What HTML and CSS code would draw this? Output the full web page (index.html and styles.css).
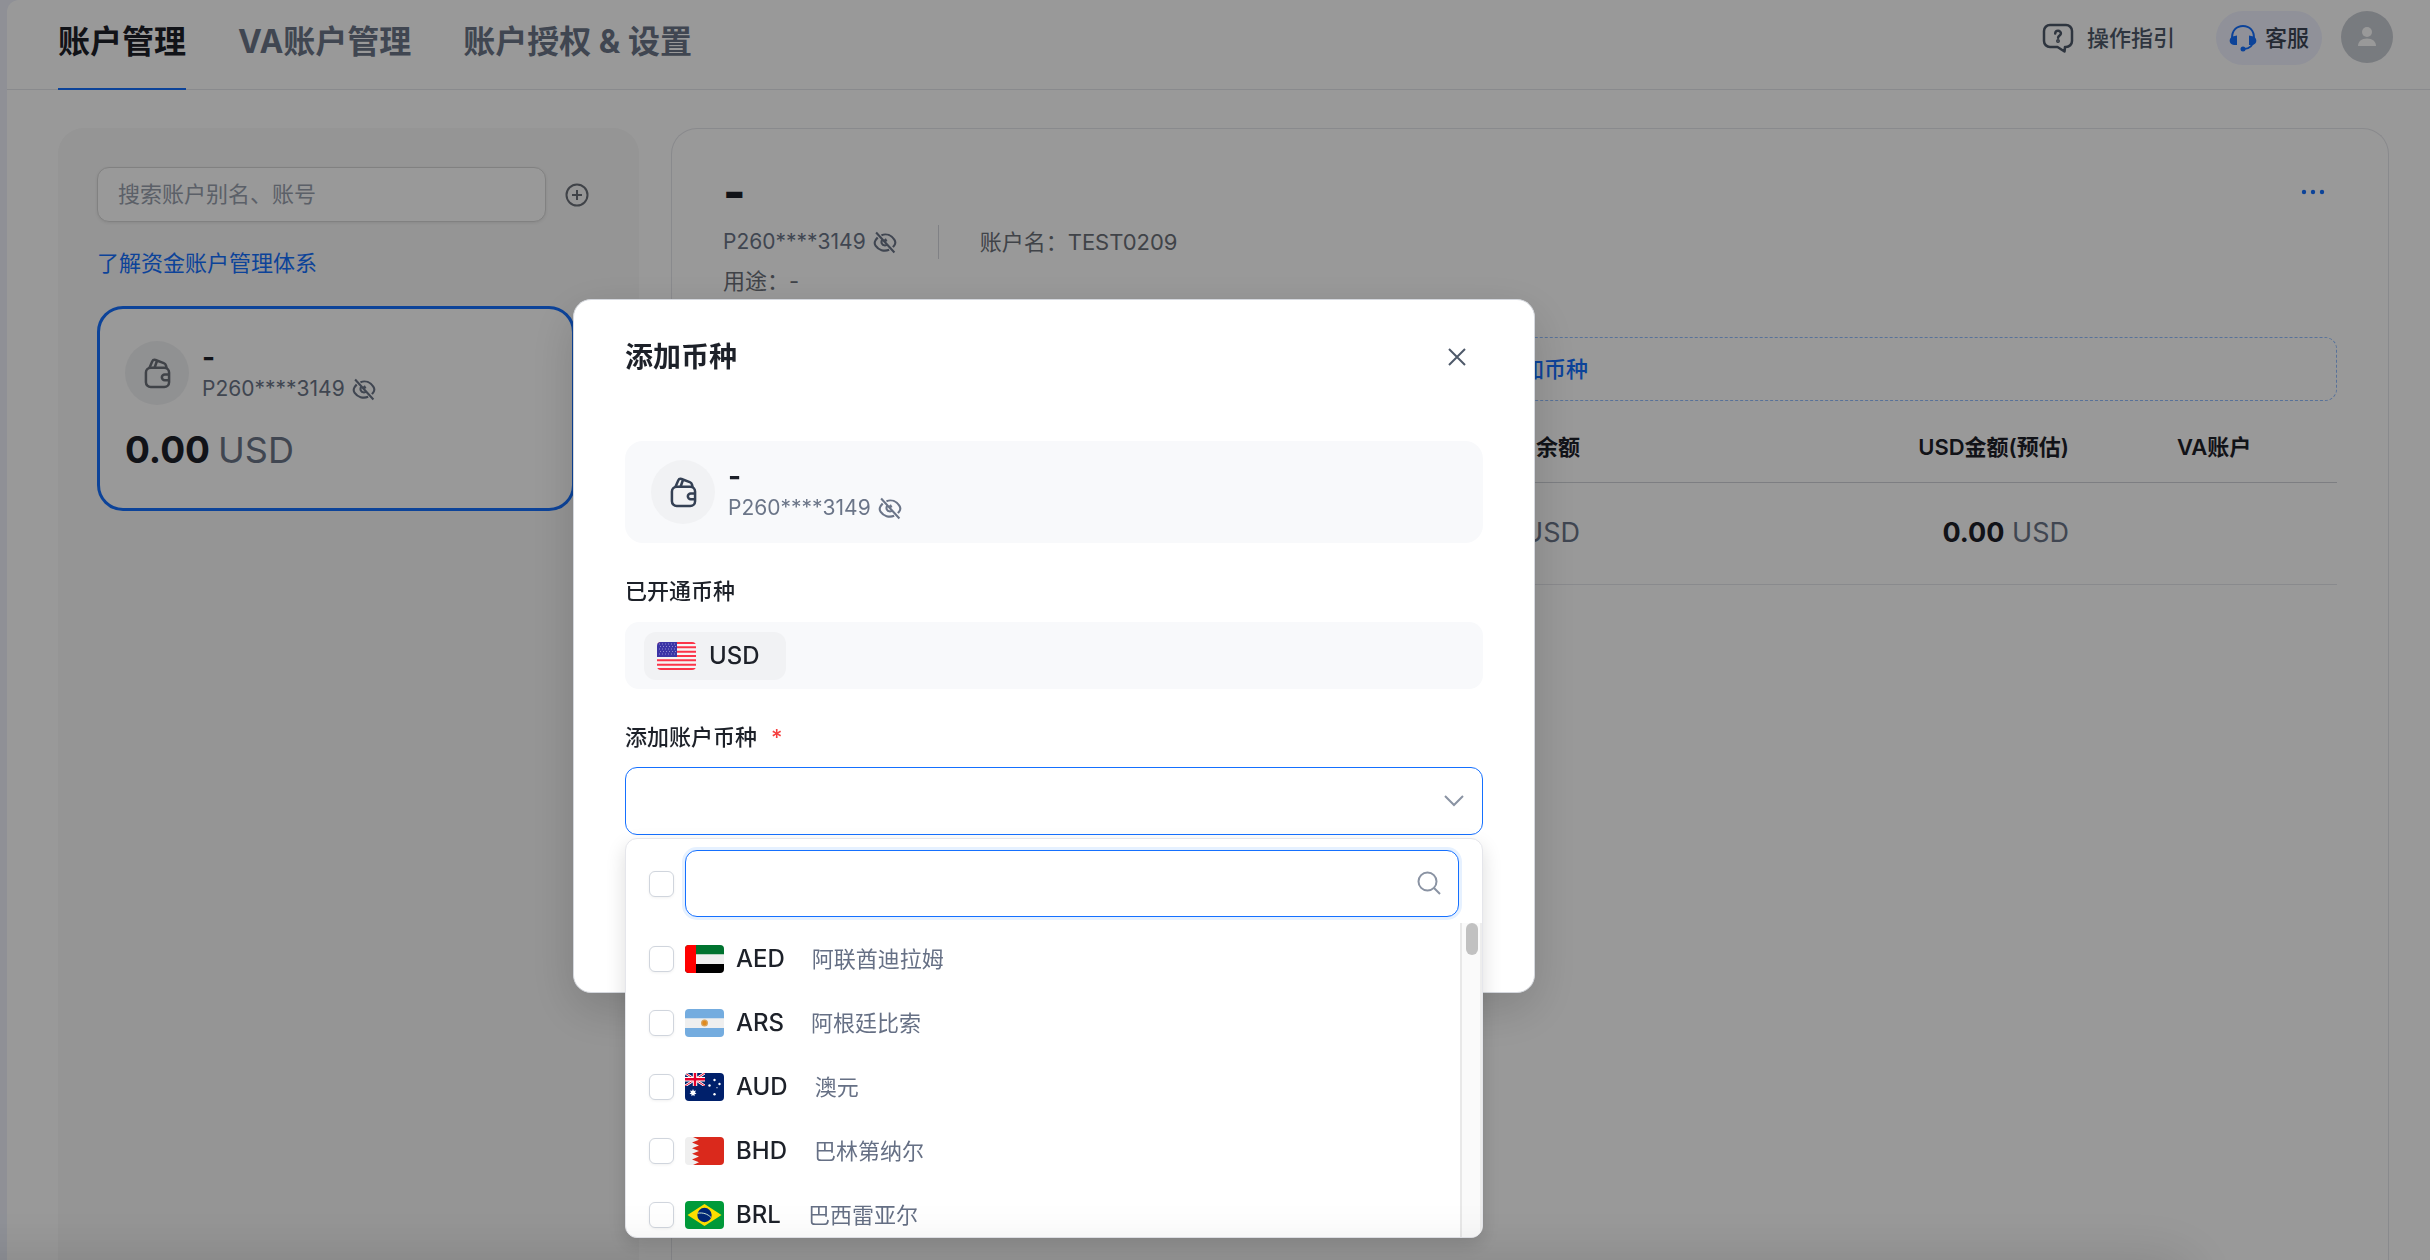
FILE: index.html
```html
<!DOCTYPE html>
<html lang="zh-CN">
<head>
    <meta charset="UTF-8">
    <meta name="viewport" content="width=device-width, initial-scale=1.0">
    <title>账户管理</title>
    <link rel="stylesheet" href="styles.css">
</head>
<body>
    <!-- Shared icons -->
    <svg class="sprite" aria-hidden="true">
        <symbol id="eye-off" viewBox="1 1 22 22">
            <path d="M8.600 5c4.900-1.900 9.600.2 12.300 4.200 1.300 1.900 1.300 3.700 0 5.600l-1.300 1.600M16 19c-4.900 1.900-10.200.2-12.900-3.800-1.300-1.900-1.300-3.700 0-5.600L5 7.200M3.500 2.500l17.500 19M9.300 9.400c-1.300 2-.7 5.200 2.700 5.400 1.100 0 2-.4 2.600-1M12 8.500l1.500 2.500"/>
        </symbol>
        <symbol id="wallet" viewBox="0 0 28 32">
            <rect x="2" y="10" width="24" height="20" rx="5"/>
            <path d="M26 17h-4.500a2.800 2.800 0 0 0 0 6H26M5.500 10.500 8.500 3.500C9.200 2 10.500 1.500 12 2l8.500 3.300c1.300.5 2 1.400 2.300 2.500l.7 2.700M11 10l2.500-7.200"/>
        </symbol>
    </svg>

    <div class="app">
        <header class="header">
            <nav class="tabs">
                <a class="tab active" href="#">账户管理</a>
                <a class="tab" href="#">VA账户管理</a>
                <a class="tab" href="#">账户授权 &amp; 设置</a>
            </nav>
            <div class="header-actions">
                <a class="guide" href="#">
                    <svg class="icon-guide" viewBox="0 0 32 30">
                        <path d="M8 2h16a6 6 0 0 1 6 6v10a6 6 0 0 1-6 6h-1l-.500 4.500L15.500 24H8a6 6 0 0 1-6-6V8a6 6 0 0 1 6-6z"/>
                        <path d="M13.200 10.500c.2-3.600 5.800-3.500 5.700.1 0 1.900-2.800 2-2.800 4.200"/>
                        <circle cx="16" cy="18" r=".7"/>
                    </svg>
                    操作指引
                </a>
                <button class="service" type="button">
                    <svg class="icon-service" viewBox="0 0 28 28">
                        <path class="band" d="M3 14C3 6.500 7.500 2 14 2s11 4.500 11 12M24.500 16c0 5-4 9-9.500 9"/>
                        <path d="M8 11.500v9.500H5c-5.500 0-5.500-7-1.500-8.500zM20 11.500v9.500h3c5.500 0 5.500-7 1.500-8.500z"/>
                        <circle cx="14" cy="25" r="2.500"/>
                    </svg>
                    客服
                </button>
                <button class="avatar" type="button" aria-label="个人中心">
                    <svg class="icon-user" viewBox="0 0 20 22">
                        <circle cx="10" cy="6" r="5"/>
                        <path d="M1 20c0-4.500 3.500-7.500 9-7.500s9 3 9 7.500z"/>
                    </svg>
                </button>
            </div>
        </header>

        <main class="main">
            <aside class="sidebar">
                <div class="search-row">
                    <input class="search" type="text" placeholder="搜索账户别名、账号" aria-label="搜索账户">
                    <button class="add-account" type="button" aria-label="新增账户">
                        <svg viewBox="0 0 24 24"><circle cx="12" cy="12" r="10.500"/><path d="M12 7v10M7 12h10"/></svg>
                    </button>
                </div>
                <a class="learn-more" href="#">了解资金账户管理体系</a>
                <div class="account-card">
                    <div class="account">
                        <span class="account-icon"><svg><use href="#wallet"/></svg></span>
                        <div class="account-info">
                            <strong class="account-name">-</strong>
                            <span class="account-no">P260****3149 <svg class="eye"><use href="#eye-off"/></svg></span>
                        </div>
                    </div>
                    <p class="total"><b>0.00</b><span>USD</span></p>
                </div>
            </aside>

            <section class="detail">
                <div class="detail-head">
                    <h2>-</h2>
                    <button class="more" type="button" aria-label="更多">
                        <svg viewBox="0 0 24 6"><circle cx="3" cy="3" r="2.200"/><circle cx="12" cy="3" r="2.200"/><circle cx="21" cy="3" r="2.200"/></svg>
                    </button>
                </div>
                <div class="detail-meta">
                    <span class="account-no">P260****3149 <svg class="eye"><use href="#eye-off"/></svg></span>
                    <span class="divider"></span>
                    <span>账户名：TEST0209</span>
                </div>
                <p class="purpose">用途：-</p>
                <button class="add-currency" type="button">
                    <svg viewBox="0 0 20 20"><path d="M10 3v14M3 10h14"/></svg>
                    添加币种
                </button>
                <table class="balances">
                    <thead>
                        <tr>
                            <th class="col-currency">币种</th>
                            <th class="col-balance">余额</th>
                            <th class="col-usd">USD金额(预估)</th>
                            <th class="col-va">VA账户</th>
                        </tr>
                    </thead>
                    <tbody>
                        <tr>
                            <td>USD</td>
                            <td class="amount"><b>0.00</b> USD</td>
                            <td class="amount"><b>0.00</b> USD</td>
                            <td></td>
                        </tr>
                    </tbody>
                </table>
            </section>
        </main>
    </div>

    <div class="overlay">
        <div class="modal" role="dialog" aria-labelledby="modal-title">
            <div class="modal-head">
                <h3 id="modal-title">添加币种</h3>
                <button class="close" type="button" aria-label="关闭">
                    <svg viewBox="0 0 20 20"><path d="M2 2l16 16M18 2L2 18"/></svg>
                </button>
            </div>

            <div class="account modal-account">
                <span class="account-icon"><svg><use href="#wallet"/></svg></span>
                <div class="account-info">
                    <strong class="account-name">-</strong>
                    <span class="account-no">P260****3149 <svg class="eye"><use href="#eye-off"/></svg></span>
                </div>
            </div>

            <p class="field-label">已开通币种</p>
            <div class="opened">
                <span class="chip">
                    <svg class="flag" viewBox="0 0 39 28">
                        <path fill="#f5f5f5" d="M0 0h39v28H0z"/>
                        <path stroke="#fb3449" stroke-width="2" d="M0 1h39M0 5.300h39M0 9.700h39M0 14h39M0 18.300h39M0 22.700h39M0 27h39"/>
                        <path fill="#3b34a6" d="M0 0h20v15H0z"/>
                        <path stroke="#8f8ad0" stroke-width="1" stroke-dasharray="1 2" d="M2 2h17M3 4.500h16M2 7h17M3 9.500h16M2 12h17"/>
                    </svg>
                    USD
                </span>
            </div>

            <label class="field-label" for="currency">添加账户币种 <span class="required">*</span></label>
            <div class="select-wrap">
                <select id="currency" class="select"><option></option></select>
                <svg class="chevron" viewBox="0 0 20 12"><path d="M1 1l9 9 9-9"/></svg>

                <div class="dropdown">
                    <div class="dropdown-search">
                        <input class="check" type="checkbox" aria-label="全选">
                        <div class="filter-wrap">
                            <input class="filter" type="text" aria-label="搜索币种">
                            <svg class="icon-search" viewBox="0 0 24 24"><circle cx="10.500" cy="10.500" r="9"/><path d="M17 17l6 6"/></svg>
                        </div>
                    </div>
                    <div class="dropdown-body">
                        <div class="options">
                            <label class="option">
                                <input class="check" type="checkbox">
                                <svg class="flag" viewBox="0 0 39 28">
                                    <path fill="#efefef" d="M0 0h39v28H0z"/>
                                    <path fill="#00732f" d="M0 0h39v9.300H0z"/>
                                    <path d="M0 19h39v9H0z"/>
                                    <path fill="#f00" d="M0 0h11v28H0z"/>
                                </svg>
                                <span class="code">AED</span>
                                <span class="name">阿联酋迪拉姆</span>
                            </label>
                            <label class="option">
                                <input class="check" type="checkbox">
                                <svg class="flag" viewBox="0 0 39 28">
                                    <path fill="#74acdf" d="M0 0h39v28H0z"/>
                                    <path fill="#efefef" d="M0 9.300h39v9.700H0z"/>
                                    <circle cx="19.500" cy="14" r="3.500" fill="#d9a35a"/>
                                    <circle cx="19.500" cy="14" r="2.200" fill="#e08a1e"/>
                                </svg>
                                <span class="code">ARS</span>
                                <span class="name">阿根廷比索</span>
                            </label>
                            <label class="option">
                                <input class="check" type="checkbox">
                                <svg class="flag" viewBox="0 0 39 28">
                                    <path fill="#00206b" d="M0 0h39v28H0z"/>
                                    <svg width="20" height="13" viewBox="0 0 20 13">
                                        <path stroke="#fff" stroke-width="2.600" d="M0 0l20 13M20 0L0 13"/>
                                        <path stroke="#e4002b" stroke-width="1" d="M0 0l20 13M20 0L0 13"/>
                                        <path stroke="#fff" stroke-width="4.400" d="M10 0v13M0 6.200h20"/>
                                        <path stroke="#e4002b" stroke-width="2.400" d="M10 0v13M0 6.200h20"/>
                                    </svg>
                                    <path fill="#fff" d="M8 16l.9 1.900 2-.4-.9 1.900 1.500 1.300-2 .5v2L8 22l-1.500 1.200v-2l-2-.5L6 19.400l-.9-1.900 2 .4z"/>
                                    <g fill="#fff"><circle cx="29.500" cy="7" r="1.200"/><circle cx="24.500" cy="12.500" r="1.200"/><circle cx="34.500" cy="11" r="1.200"/><circle cx="29.500" cy="21.200" r="1.200"/><circle cx="32" cy="14.700" r=".6"/></g>
                                </svg>
                                <span class="code">AUD</span>
                                <span class="name">澳元</span>
                            </label>
                            <label class="option">
                                <input class="check" type="checkbox">
                                <svg class="flag" viewBox="0 0 39 28">
                                    <path fill="#efefef" d="M0 0h39v28H0z"/>
                                    <path fill="#da291c" d="M39 0H8l6 2.800-7 2.800 7 2.800-7 2.800 7 2.800-7 2.800 7 2.800-7 2.800 7 2.800L8 28h31z"/>
                                </svg>
                                <span class="code">BHD</span>
                                <span class="name">巴林第纳尔</span>
                            </label>
                            <label class="option">
                                <input class="check" type="checkbox">
                                <svg class="flag" viewBox="0 0 39 28">
                                    <path fill="#009b3a" d="M0 0h39v28H0z"/>
                                    <path fill="#fedf00" d="M2.500 14l17-11 17 11-17 11z"/>
                                    <circle cx="19.500" cy="14" r="7.200" fill="#002776"/>
                                    <path fill="none" stroke="#cfe8d6" stroke-width="1" d="M12.700 12.200c5-.8 10 .6 13.300 4.300"/>
                                </svg>
                                <span class="code">BRL</span>
                                <span class="name">巴西雷亚尔</span>
                            </label>
                        </div>
                        <div class="scrollbar"><div class="thumb"></div></div>
                    </div>
                </div>
            </div>
        </div>
    </div>
</body>
</html>
```
FILE: styles.css
```css
* {
    box-sizing: border-box;
}

body {
    margin: 0;
    height: 100vh;
    overflow: hidden;
    background: #eef1fb;
    font-family: Inter, "Noto Sans CJK SC", sans-serif;
    font-size: 22px;
    line-height: 32px;
    color: #1d2129;
}

h2, h3, p {
    margin: 0;
}

a {
    color: inherit;
    text-decoration: none;
}

button {
    display: flex;
    align-items: center;
    justify-content: center;
    padding: 0;
    border: none;
    background: none;
    font: inherit;
    color: inherit;
    cursor: pointer;
}

svg {
    display: block;
    flex: none;
}

.sprite {
    position: absolute;
    width: 0;
    height: 0;
}

.app {
    display: flex;
    flex-direction: column;
    height: 100vh;
    margin-left: 7px;
    background: #fff;
    border-top-left-radius: 12px;
}

/* Header */
.header {
    display: flex;
    justify-content: space-between;
    height: 90px;
    padding: 0 37px 0 51px;
    border-bottom: 1px solid #e5e6eb;
}

.tabs {
    display: flex;
    gap: 52px;
}

.tab {
    height: 90px;
    padding-top: 18px;
    font-size: 32px;
    font-weight: 700;
    line-height: 48px;
    color: #6b7588;
}

.tab.active {
    color: #1d2129;
    border-bottom: 2px solid #1570ff;
}

.header-actions {
    display: flex;
    align-items: flex-start;
    padding-top: 11px;
}

.guide {
    display: flex;
    align-items: center;
    gap: 13px;
    height: 54px;
    margin-right: 41px;
    font-weight: 500;
    color: #4e5969;
}

.icon-guide {
    width: 32px;
    height: 30px;
    fill: none;
    stroke: #4e5969;
    stroke-width: 2.5;
    stroke-linejoin: round;
    stroke-linecap: round;
}

.service {
    gap: 8px;
    height: 54px;
    padding: 0 13px;
    margin-right: 19px;
    border-radius: 27px;
    background: #f0f2ff;
    font-weight: 500;
    color: #3c4555;
}

.icon-service {
    width: 28px;
    height: 28px;
    fill: #1570ff;
}

.icon-service .band {
    fill: none;
    stroke: #1570ff;
    stroke-width: 2;
}

.avatar {
    width: 52px;
    height: 52px;
    border-radius: 50%;
    background: #c9cdd4;
}

.icon-user {
    width: 20px;
    height: 22px;
    fill: #fff;
}

/* Page body */
.main {
    display: flex;
    flex: 1;
    gap: 32px;
    padding: 38px 41px 0 51px;
}

.sidebar {
    width: 581px;
    padding: 39px;
    border-radius: 26px 26px 0 0;
    background: #f8f8f8;
}

.search-row {
    display: flex;
    align-items: center;
    gap: 19px;
}

.search {
    width: 449px;
    height: 55px;
    padding: 0 20px 2px;
    border: 1px solid #d8d8d8;
    border-radius: 12px;
    background: #fff;
    font: inherit;
    box-shadow: 0 1px 3px rgba(0, 0, 0, 0.08);
}

.search::placeholder {
    color: #98a0ae;
}

.add-account svg {
    width: 24px;
    height: 24px;
    fill: none;
    stroke: #6b7079;
    stroke-width: 2;
}

.learn-more {
    display: block;
    margin-top: 25px;
    color: #1570ff;
}

.account-card {
    width: 478px;
    height: 205px;
    margin-top: 27px;
    padding: 32px 25px;
    border: 3px solid #1570ff;
    border-radius: 26px;
    background: #fff;
}

.account {
    display: flex;
    align-items: center;
    gap: 13px;
}

.account-icon {
    display: flex;
    align-items: center;
    justify-content: center;
    width: 64px;
    height: 64px;
    border-radius: 50%;
    background: #f1f2f4;
}

.account-icon svg {
    width: 27px;
    height: 31px;
    fill: none;
    stroke: #6b7079;
    stroke-width: 2.6;
}

.account-info {
    display: flex;
    flex-direction: column;
}

.account-name {
    font-size: 28px;
}

.account-no {
    display: flex;
    align-items: center;
    gap: 7px;
    font-size: 21px;
    color: #6b7588;
}

.eye {
    width: 24px;
    height: 23px;
    fill: none;
    stroke: #6b7588;
    stroke-width: 2;
}

.total {
    display: flex;
    gap: 8px;
    margin-top: 21px;
    font-size: 36px;
    line-height: 48px;
    color: #6b7588;
}

.total b {
    font-size: 37px;
}

.total b, .amount b {
    color: #1d2129;
}

.detail {
    flex: 1;
    padding: 37px 51px;
    border: 1px solid #e5e6eb;
    border-bottom: none;
    border-radius: 26px 26px 0 0;
}

.detail-head {
    display: flex;
    align-items: center;
    justify-content: space-between;
    height: 52px;
}

.detail-head h2 {
    font-size: 48px;
    font-weight: 800;
}

.more {
    margin-right: 12px;
}

.more svg {
    width: 24px;
    height: 6px;
    fill: #1570ff;
}

.detail-meta {
    display: flex;
    align-items: center;
    gap: 41px;
    margin-top: 7px;
    color: #6b7079;
}

.divider {
    width: 1px;
    height: 34px;
    background: #d5d8de;
}

.purpose {
    margin-top: 6px;
    color: #6b7079;
}

.add-currency {
    width: 100%;
    height: 64px;
    margin-top: 40px;
    gap: 8px;
    border: 1px dashed #93bfff;
    border-radius: 12px;
    color: #1570ff;
    font-weight: 500;
}

.add-currency svg {
    width: 20px;
    height: 20px;
    stroke: #1570ff;
    stroke-width: 2;
}

.balances {
    width: 100%;
    margin-top: 12px;
    table-layout: fixed;
    border-collapse: collapse;
}

.balances th {
    height: 69px;
    padding: 0 54px;
    border-bottom: 1px solid #d0d3d9;
    font-weight: 600;
    text-align: left;
}

.balances td {
    height: 102px;
    padding: 0 54px;
    border-bottom: 1px solid #e5e6eb;
}

.balances .col-currency {
    padding-left: 0;
}

.balances .col-balance {
    text-align: right;
}

.balances .col-usd {
    width: 489px;
    text-align: right;
}

.balances .col-va {
    width: 214px;
}

.balances .amount {
    font-size: 27px;
    text-align: right;
    color: #6b7588;
}

/* Modal */
.overlay {
    position: fixed;
    inset: 0;
    display: flex;
    align-items: flex-start;
    justify-content: center;
    padding: 299px 322px 0 0;
    background: rgba(0, 0, 0, 0.4);
}

/* soft shade along the bottom edge of the window */
.overlay::after {
    content: "";
    position: absolute;
    top: 100%;
    left: -80px;
    right: 240px;
    height: 80px;
    box-shadow: 0 0 60px rgba(0, 0, 0, 0.14);
    pointer-events: none;
}

.modal {
    width: 962px;
    padding: 31px 51px 157px;
    border: 1px solid #d5d8de;
    border-radius: 18px;
    background: #fff;
    box-shadow: 0 16px 48px rgba(0, 0, 0, 0.16);
}

.modal-head {
    display: flex;
    align-items: center;
    justify-content: space-between;
    height: 52px;
    padding-right: 16px;
}

.modal-head h3 {
    font-size: 28px;
    font-weight: 600;
}

.close svg {
    width: 20px;
    height: 20px;
    stroke: #4e5969;
    stroke-width: 2;
}

.modal-account {
    height: 102px;
    margin-top: 58px;
    padding: 0 26px;
    border-radius: 18px;
    background: #f8f9fb;
}

.modal-account .account-icon svg {
    stroke: #344054;
}

.field-label {
    display: block;
    margin-top: 32px;
    font-weight: 500;
}

.required {
    margin-left: 8px;
    color: #f53f3f;
}

.opened {
    display: flex;
    align-items: center;
    height: 67px;
    margin-top: 15px;
    padding: 0 19px;
    border-radius: 14px;
    background: #f8f9fb;
}

.chip {
    display: flex;
    align-items: center;
    gap: 13px;
    height: 48px;
    padding: 0 26px 0 13px;
    border-radius: 12px;
    background: #f1f2f4;
    font-size: 24px;
    font-weight: 500;
}

.flag {
    width: 39px;
    height: 28px;
    border-radius: 4px;
}

.select-wrap {
    position: relative;
    margin-top: 14px;
}

.select {
    display: block;
    width: 100%;
    height: 68px;
    padding: 0 56px 0 20px;
    border: 1px solid #1570ff;
    border-radius: 12px;
    background: #fff;
    font: inherit;
    appearance: none;
}

.chevron {
    position: absolute;
    top: 28px;
    right: 19px;
    width: 20px;
    height: 12px;
    fill: none;
    stroke: #8a93a3;
    stroke-width: 2;
}

.dropdown {
    position: absolute;
    top: 71px;
    left: 0;
    right: 0;
    height: 400px;
    display: flex;
    flex-direction: column;
    overflow: hidden;
    border: 1px solid #e5e6eb;
    border-radius: 12px;
    background: #fff;
    box-shadow: 0 8px 20px rgba(0, 0, 0, 0.14);
}

.dropdown-search {
    display: flex;
    align-items: center;
    gap: 11px;
    padding: 11px 23px 6px;
}

.check {
    flex: none;
    width: 25px;
    height: 26px;
    margin: 0;
    border: 1px solid #d0d5dd;
    border-radius: 6px;
    background: #fff;
    box-shadow: 0 1px 3px rgba(0, 0, 0, 0.06);
    appearance: none;
}

.filter-wrap {
    position: relative;
    flex: 1;
}

.filter {
    display: block;
    width: 100%;
    height: 67px;
    padding: 0 56px 0 20px;
    border: 1px solid #1570ff;
    border-radius: 12px;
    outline: none;
    font: inherit;
    box-shadow: 0 0 0 3px #e6f1ff;
}

.icon-search {
    position: absolute;
    top: 21px;
    right: 18px;
    width: 24px;
    height: 24px;
    fill: none;
    stroke: #8a93a3;
    stroke-width: 2;
}

.dropdown-body {
    display: flex;
    flex: 1;
    min-height: 0;
}

.options {
    flex: 1;
    overflow: hidden;
    padding: 4px 23px 0;
}

.option {
    display: flex;
    align-items: center;
    gap: 11px;
    height: 64px;
}

.code {
    margin-left: 1px;
    font-size: 24px;
    font-weight: 500;
}

.name {
    margin-left: 16px;
    color: #667085;
}

.scrollbar {
    width: 22px;
    padding-left: 4px;
    border-left: 2px solid #e8e8e8;
    border-right: 2px solid #ededed;
    background: #fafafa;
}

.thumb {
    width: 12px;
    height: 32px;
    border-radius: 6px;
    background: #c1c1c1;
}
```
